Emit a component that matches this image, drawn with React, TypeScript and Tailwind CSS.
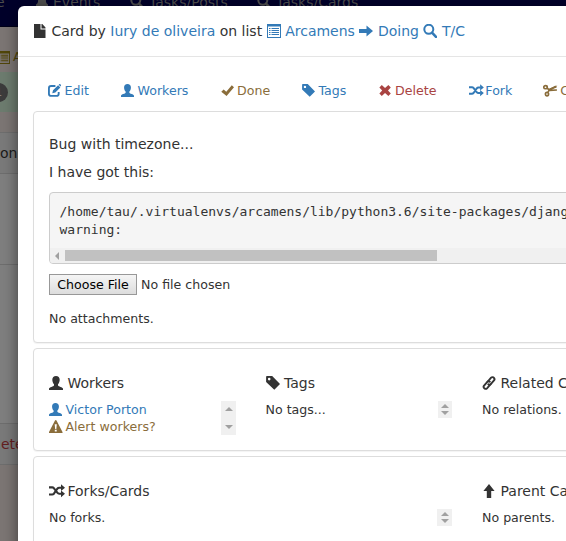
import type { ReactNode } from "react";

type IconName =
  | "file" | "list" | "arrowRight" | "search" | "edit" | "user" | "ok" | "tag"
  | "remove" | "random" | "scissors" | "warning" | "link" | "arrowUp" | "bell";

const glyphs: Record<IconName, ReactNode> = {
  file: <path d="M1 0h6.500v5.500H12.500V14H1zM8.500 0h.8l3.200 3.600v1H8.500z" />,
  list: (
    <path fillRule="evenodd" d="M0 0h14v14H0zM1 2.600v10.400h12V2.600zM2 4h1.500v1H2zM4.500 4h7.500v1H4.500zM2 6h1.500v1H2zM4.500 6h7.500v1H4.500zM2 8h1.500v1H2zM4.500 8h7.500v1H4.500zM2 10h1.500v1H2zM4.500 10h7.500v1H4.500z" />
  ),
  arrowRight: <path d="M0 5h7.500V1.400L14 7l-6.500 5.600V9H0z" />,
  arrowUp: <path d="M7 0l5.600 7H9.200v7H4.800V7H1.400z" />,
  search: (
    <g fill="none" stroke="currentColor">
      <circle cx="5.800" cy="5.300" r="4.500" strokeWidth="2" />
      <path d="M9 8.600l4 4.200" strokeWidth="2.600" strokeLinecap="round" />
    </g>
  ),
  edit: (
    <>
      <path d="M8 2.200H3.400Q1 2.200 1 4.500v5.900q0 2.400 2.400 2.400h5.800q2.300 0 2.300-2.400V8.600" fill="none" stroke="currentColor" strokeWidth="2" />
      <path d="M4.600 10l.8-3.300 5.500-5.400 2.400 2.400L7.900 9.200zM11.500 .8l.9-.7q.3-.2.6 0l1 1q.2.300 0 .6l-.6.9z" />
    </>
  ),
  user: (
    <path d="M7 0c2.300 0 3.700 1.500 3.700 3.700 0 1.800-.8 3.600-1.700 4.500v1.200c.2 1 4.900 1.600 5 3.200V14H0v-1.400c.1-1.600 4.800-2.200 5-3.200V8.200C4.100 7.300 3.300 5.500 3.300 3.700 3.300 1.500 4.700 0 7 0z" />
  ),
  ok: <path d="M.3 8.400L2.800 6l2.900 2.300L11.600 1.300 14 3.400 6 13z" />,
  tag: (
    <path fillRule="evenodd" d="M.1.900Q.1.100.9.100H6.200L14 8.100 8.300 13.800.1 5.900zM3.200 1.800a1.300 1.300 0 100 2.600 1.300 1.300 0 000-2.600z" />
  ),
  remove: <path d="M3 1.200L6.500 4.200l3.600-3 2.600 2.600L9.700 7l3 3.200-2.600 2.600-3.600-3-3.500 3L.4 10.200 3.400 7 .4 3.800z" />,
  random: (
    <>
      <path d="M0 3.400h3.200q1 0 1.600.8l3.500 4.500q.8 1 1.900 1H12.500M0 10.500h3.200q1 0 1.700-.8l3.500-5q.7-1 1.800-1H12.500" fill="none" stroke="currentColor" strokeWidth="2.100" />
      <path d="M12 .3l4 3.500-4 3.300zM12 6.500l4 3.300-4 3.500z" />
    </>
  ),
  scissors: (
    <>
      <g fill="none" stroke="currentColor" strokeWidth="1.800">
        <ellipse cx="2.700" cy="3.400" rx="1.900" ry="1.700" />
        <ellipse cx="4.300" cy="10.900" rx="1.700" ry="1.900" />
        <path d="M4.300 4.300l3 2.500L15 6.500M5.200 9l2.200-3.500L14.500 3" />
      </g>
      <path d="M7 5l6-3h2.500L8.500 7z" />
    </>
  ),
  warning: (
    <path fillRule="evenodd" d="M7 0q.5 0 .8.6l6.200 11.800V14H0v-1.600L6.200.6Q6.500 0 7 0zM5.900 4.500l.5 4.800h1.200l.5-4.800zM6 10.200V12h2v-1.800z" />
  ),
  link: (
    <g fill="none" stroke="currentColor" strokeWidth="1.900" strokeLinecap="round">
      <path d="M5.700 5.600L9.100 1.700q1-1 2.200-.3l.7.600q1 1 .2 2.200L8.600 8.300q-1.200 1-2.300 0" />
      <path d="M7.800 5.700q-1.200-1-2.300 0L1.900 9.800q-.8 1.200.2 2.200l.7.600q1.200.7 2.200-.3l3.400-3.900" />
    </g>
  ),
  bell: <path d="M7 0q4 1.500 4 6.500 0 2 2 3v1.500H1V9.500q2-1 2-3Q3 1.500 7 0zM5 11.500h4L7 14z" />,
};

function Icon({ name, size = 14, wide = false }: { name: IconName; size?: number; wide?: boolean }) {
  return (
    <svg
      width={wide ? (size * 16) / 14 : size}
      height={size}
      viewBox={wide ? "0 0 16 14" : "0 0 14 14"}
      fill="currentColor"
      className="shrink-0"
    >
      {glyphs[name]}
    </svg>
  );
}

function Arrows({ tall = false, narrow = false }: { tall?: boolean; narrow?: boolean }) {
  return (
    <div
      className={`flex shrink-0 flex-col items-center justify-between bg-[#f0f0f0] ${
        tall ? "h-[34px] py-[6px]" : "h-[17px] py-[3px]"
      } ${narrow ? "mr-px w-[14px]" : "w-[15px]"}`}
    >
      <svg width="8" height="4" viewBox="0 0 8 4" fill="#a0a0a0"><path d="M0 4L4 0l4 4z" /></svg>
      <svg width="8" height="4" viewBox="0 0 8 4" fill="#a0a0a0"><path d="M0 0l4 4 4-4z" /></svg>
    </div>
  );
}

function Action({ icon, label, tone, gap }: { icon: IconName; label: string; tone: string; gap: string }) {
  return (
    <div className={`flex items-center whitespace-nowrap ${tone} ${gap}`}>
      <Icon name={icon} size={13} wide={icon === "random" || icon === "scissors"} />
      <span className="pt-px">{label}</span>
    </div>
  );
}

function Section({ icon, title, gap, children }: { icon: IconName; title: string; gap: string; children: ReactNode }) {
  return (
    <div className="min-w-0">
      <h4 className={`flex h-[20px] items-center whitespace-nowrap text-[14px] ${gap}`}>
        <Icon name={icon} wide={icon === "random"} />
        <span>{title}</span>
      </h4>
      <div className="mt-[8px] flex justify-between whitespace-nowrap leading-[17px]">{children}</div>
    </div>
  );
}

const panel = "rounded-[4px] border border-[#ddd] bg-white shadow-[0_1px_1px_rgba(0,0,0,0.05)]";

function Backdrop() {
  return (
    <div className="h-[541px] w-[566px] overflow-hidden bg-[#7c7674] text-[14px]">
      <div className="h-[27px] overflow-hidden border-b border-[#000018] bg-[#00002a] text-[#4c4c4c]">
        <div className="-mt-[8px] flex h-[20px] items-center whitespace-nowrap">
          <span className="-ml-[4px] w-[35px]">e</span>
          <div className="flex w-[99px] items-center gap-[4px] pl-[4px]"><Icon name="bell" /><span>Events</span></div>
          <div className="flex w-[127px] items-center gap-[5px]"><Icon name="search" /><span>Tasks/Posts</span></div>
          <div className="flex items-center gap-[5px]"><Icon name="search" /><span>Tasks/Cards</span></div>
        </div>
      </div>
      <div className="flex h-[45px] items-end gap-[3px] pb-[5px] text-[12.6px] text-[#514609]">
        <div className="-ml-[3px] pb-[3px]"><Icon name="list" size={13} /></div><span>A</span>
      </div>
      <div className="h-[40px] bg-[#6d7c6f] pt-[11px]">
        <div className="-ml-[11px] flex h-[19px] w-[19px] items-center justify-end rounded-full bg-[#3c3c3c] pr-[6px] text-[10px] text-[#808080]">1</div>
      </div>
      <div className="h-[20px]" />
      <div className="flex h-[42px] items-center border-y border-[#6e6e6e] bg-[#7a7a7a] text-[#1a1a1a]">on</div>
      <div className="h-[91px] border-b border-[#6e6e6e] bg-[#7f7f7f]" />
      <div className="h-[158px] bg-[#7f7f7f]" />
      <div className="flex h-[42px] items-center border-y border-[#6e6e6e] bg-[#7a7a7a] pl-px text-[#64201f]">ete</div>
    </div>
  );
}

export default function App() {
  return (
    <div className="relative h-[541px] w-[566px] overflow-hidden font-['DejaVu_Sans',sans-serif] text-[12.6px] text-[#333]">
      <Backdrop />
      <div className="absolute left-[18px] top-[6px] h-[560px] w-[760px] rounded-[6px] bg-white shadow-[0_5px_15px_rgba(0,0,0,0.5)]">
        <header className="flex h-[51px] items-center whitespace-nowrap border-b border-[#e5e5e5] pl-[15px] text-[14px]">
          <Icon name="file" />
          <span className="ml-[4.500px]">Card by <a className="text-[#337ab7]">Iury de oliveira</a> on list</span>
          <a className="ml-[4.500px] flex items-center text-[#337ab7]">
            <Icon name="list" />
            <span className="ml-[4.500px] mr-[4.500px]">Arcamens</span>
            <Icon name="arrowRight" />
            <span className="ml-[4.500px] mr-[4.500px]">Doing</span>
            <Icon name="search" />
            <span className="ml-[4.500px]">T/C</span>
          </a>
        </header>
        <div className="pl-[15px]">
          <nav className="grid h-[54px] grid-cols-[73px_100px_81px_77px_90px_74px_80px] items-center pl-[15px] pt-[13px]">
            <Action icon="edit" label="Edit" tone="text-[#337ab7]" gap="gap-[3.500px]" />
            <Action icon="user" label="Workers" tone="text-[#337ab7]" gap="gap-[3.500px]" />
            <Action icon="ok" label="Done" tone="text-[#8a6d3b]" gap="gap-[3px]" />
            <Action icon="tag" label="Tags" tone="text-[#337ab7]" gap="gap-[3.500px]" />
            <Action icon="remove" label="Delete" tone="text-[#a94442]" gap="gap-[3px]" />
            <Action icon="random" label="Fork" tone="text-[#337ab7]" gap="gap-[1.500px]" />
            <Action icon="scissors" label="Cut" tone="text-[#8a6d3b]" gap="gap-[2.500px]" />
          </nav>
          <section className={`${panel} h-[232px] w-[730px] px-[15px] pt-[22px]`}>
            <p className="text-[14px] leading-[20px]">Bug with timezone...</p>
            <p className="mt-[8px] text-[14px] leading-[20px]">I have got this:</p>
            <div className="mt-[10px] h-[72px] overflow-hidden rounded-[4px] border border-[#ccc] bg-[#f5f5f5]">
              <pre className="h-[55px] pl-[9.500px] pt-[10px] font-['DejaVu_Sans_Mono',monospace] text-[13px] leading-[18px]">{"/home/tau/.virtualenvs/arcamens/lib/python3.6/site-packages/django/db/models/fields\nwarning:"}</pre>
              <div className="flex h-[15px] items-center bg-[#f0f0f0] pl-[5px]">
                <svg width="4" height="8" viewBox="0 0 4 8" fill="#a0a0a0"><path d="M4 0L0 4l4 4z" /></svg>
                <div className="ml-[6px] h-[11px] w-[372px] bg-[#c1c1c1]" />
              </div>
            </div>
            <div className="mt-[10px] flex h-[21px] items-center gap-[4px]">
              <button className="flex h-[21px] w-[88px] items-center justify-center border border-[#989898] bg-linear-to-b from-[#f5f5f5] to-[#dddddd] pt-px text-black">Choose File</button>
              <span className="pt-px">No file chosen</span>
            </div>
            <p className="mt-[14px] leading-[20px]">No attachments.</p>
          </section>
          <section className={`${panel} mt-[5px] grid h-[103px] w-[730px] grid-cols-[187px_187px_187px] gap-x-[29.500px] px-[15px] pt-[24px]`}>
            <Section icon="user" title="Workers" gap="gap-[4.500px]">
              <div>
                <a className="flex items-center gap-[3.500px] text-[#337ab7]"><Icon name="user" size={13} />Victor Porton</a>
                <a className="flex items-center gap-[3px] text-[#8a6d3b]"><Icon name="warning" size={13.500} />Alert workers?</a>
              </div>
              <Arrows tall />
            </Section>
            <Section icon="tag" title="Tags" gap="gap-[4.500px]">
              No tags...<Arrows narrow />
            </Section>
            <Section icon="link" title="Related Cards" gap="gap-[4.500px]">No relations.</Section>
          </section>
          <section className={`${panel} mt-[5px] grid h-[110px] w-[730px] grid-cols-[403px_187px] gap-x-[30px] px-[15px] pt-[24px]`}>
            <Section icon="random" title="Forks/Cards" gap="gap-[2.500px]">No forks.<Arrows /></Section>
            <Section icon="arrowUp" title="Parent Cards" gap="gap-[4.500px]">No parents.</Section>
          </section>
        </div>
      </div>
    </div>
  );
}
